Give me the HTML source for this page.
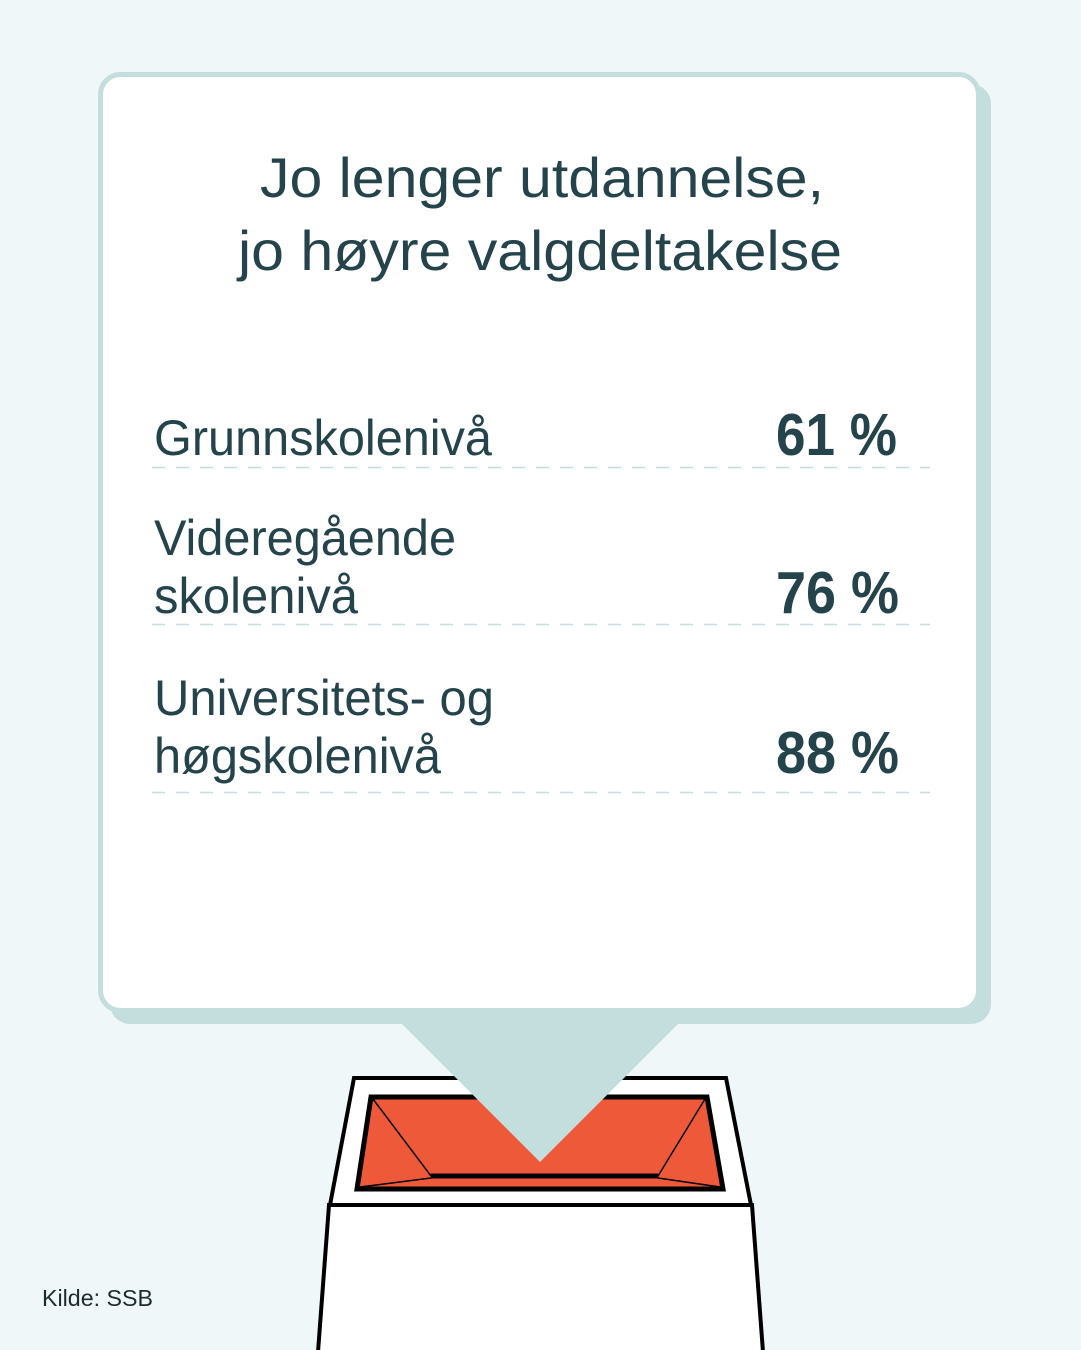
<!DOCTYPE html>
<html><head><meta charset="utf-8"><style>
html,body{margin:0;padding:0;background:#eff7f8;}
svg{display:block}
text{font-family:"Liberation Sans",sans-serif;fill:#24434a}
</style></head><body>
<svg width="1081" height="1350" viewBox="0 0 1081 1350" xmlns="http://www.w3.org/2000/svg">
<rect width="1081" height="1350" fill="#eff7f8"/>
<!-- card shadow -->
<rect x="110" y="84" width="881" height="940" rx="20" fill="#c3dedd"/>
<!-- card -->
<rect x="100.5" y="74.5" width="878" height="936" rx="20" fill="#fff" stroke="#c3dedd" stroke-width="5"/>
<!-- ballot box -->
<path d="M329,1205 L318,1352 L763,1352 L752,1205 Z" fill="#fff" stroke="#000" stroke-width="4"/>
<path d="M354,1078 L726,1078 L751,1205 L330,1205 Z" fill="#fff" stroke="#000" stroke-width="4"/>
<path d="M371,1097 L707,1097 L723,1189 L357,1189 Z" fill="#ee5a39" stroke="#000" stroke-width="5"/>
<path d="M373,1099 L431,1176 L658,1176 L705,1099" fill="none" stroke="#000" stroke-width="1.5"/>
<path d="M431,1176 L658,1176" stroke="#000" stroke-width="5"/>
<path d="M360,1187 L431,1178 M658,1178 L720,1187" stroke="#000" stroke-width="1.5"/>
<!-- pointer -->
<path d="M400,1022 L680,1022 L540,1162 Z" fill="#c3dedd"/>
<!-- title -->
<text x="260" y="197" font-size="56" textLength="564" lengthAdjust="spacingAndGlyphs">Jo lenger utdannelse,</text>
<text x="238" y="270" font-size="56" textLength="604" lengthAdjust="spacingAndGlyphs">jo høyre valgdeltakelse</text>
<!-- rows -->
<text x="154" y="455" font-size="50" textLength="338" lengthAdjust="spacingAndGlyphs">Grunnskolenivå</text>
<text x="776" y="455" font-size="59" font-weight="bold" textLength="121" lengthAdjust="spacingAndGlyphs">61 %</text>
<text x="154" y="555" font-size="50" textLength="302" lengthAdjust="spacingAndGlyphs">Videregående</text>
<text x="154" y="613" font-size="50" textLength="204" lengthAdjust="spacingAndGlyphs">skolenivå</text>
<text x="776" y="613" font-size="59" font-weight="bold" textLength="123" lengthAdjust="spacingAndGlyphs">76 %</text>
<text x="154" y="715" font-size="50" textLength="340" lengthAdjust="spacingAndGlyphs">Universitets- og</text>
<text x="154" y="773" font-size="50" textLength="287" lengthAdjust="spacingAndGlyphs">høgskolenivå</text>
<text x="776" y="773" font-size="59" font-weight="bold" textLength="123" lengthAdjust="spacingAndGlyphs">88 %</text>
<g stroke="#c3dedd" stroke-width="1.5" stroke-dasharray="13 11">
<line x1="152" y1="467.5" x2="930" y2="467.5"/>
<line x1="152" y1="624.5" x2="930" y2="624.5"/>
<line x1="152" y1="792.5" x2="930" y2="792.5"/>
</g>
<text x="42" y="1306" font-size="23" textLength="111" lengthAdjust="spacingAndGlyphs" style="fill:#1e2b2e">Kilde: SSB</text>
</svg>
</body></html>
